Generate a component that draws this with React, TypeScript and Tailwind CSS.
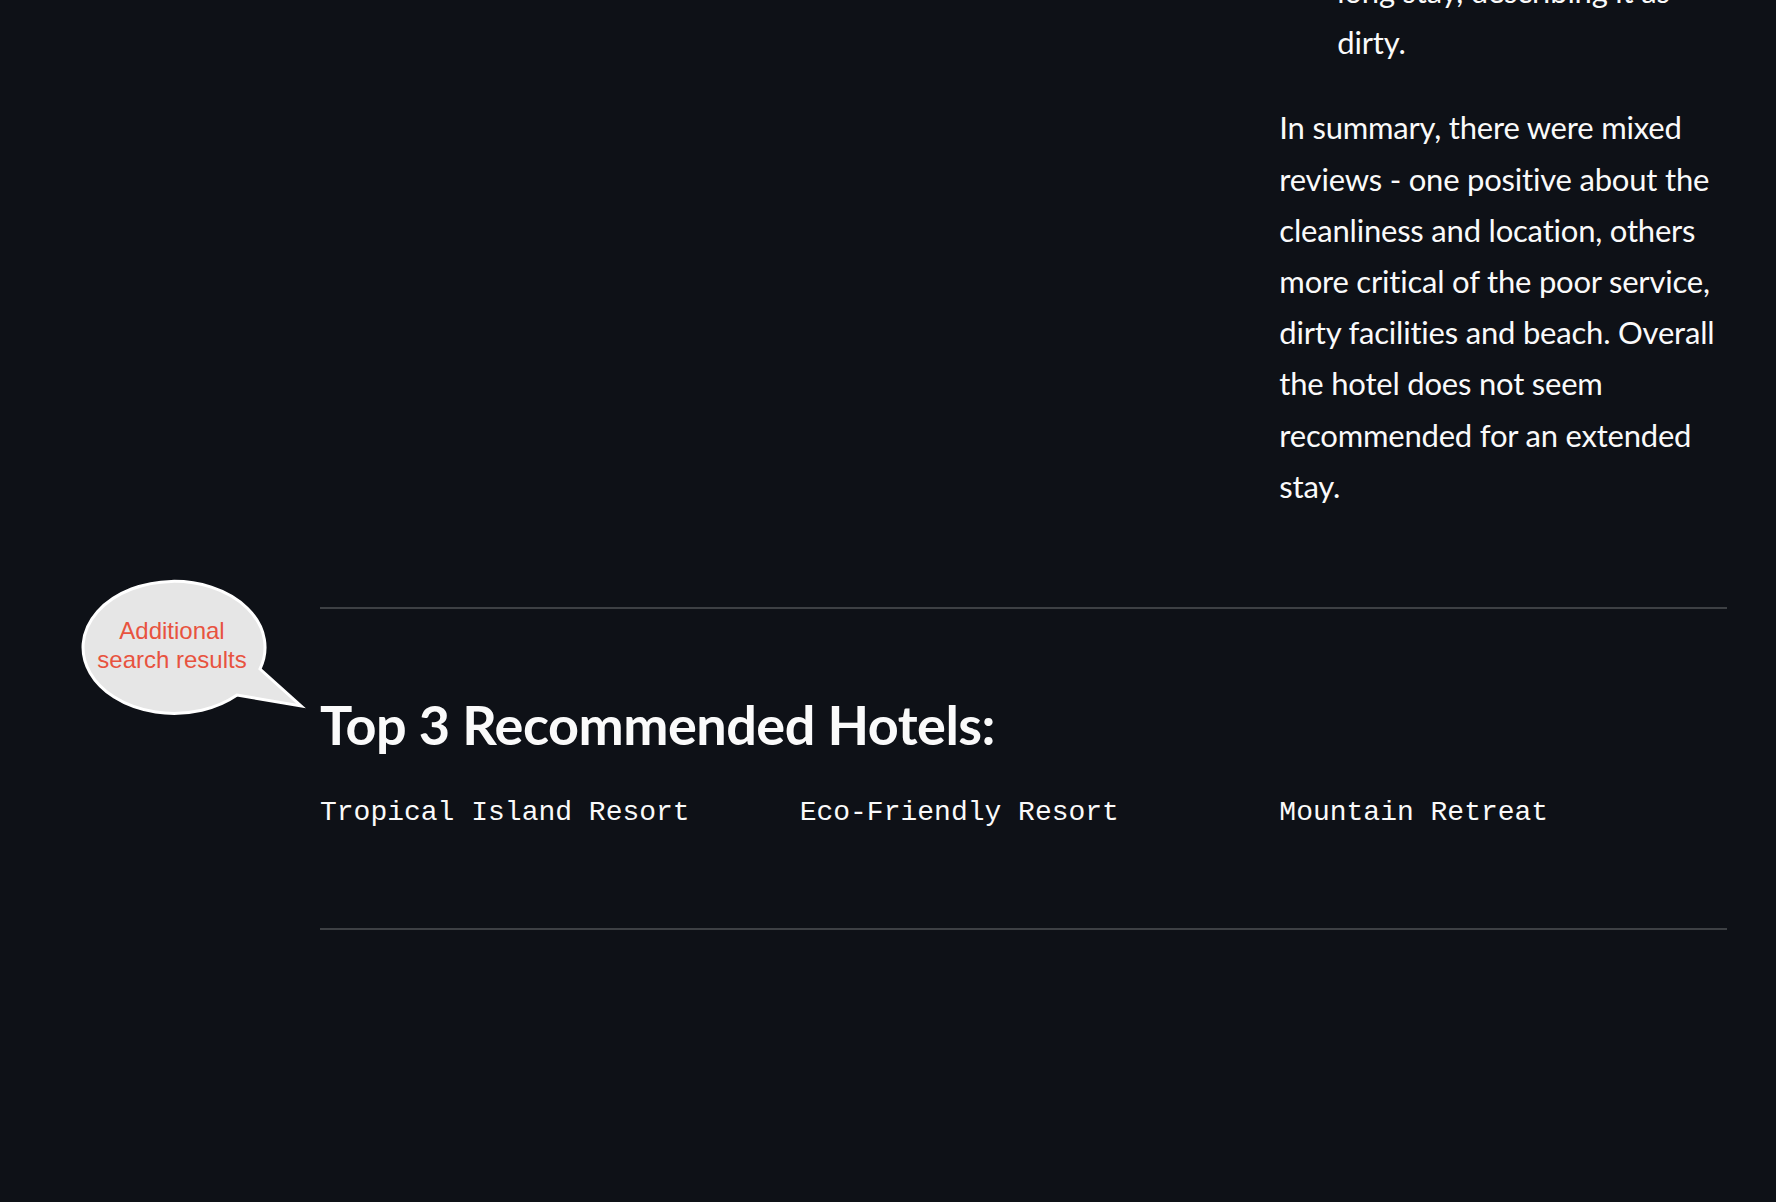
const summary = [
  "In summary, there were mixed",
  "reviews - one positive about the",
  "cleanliness and location, others",
  "more critical of the poor service,",
  "dirty facilities and beach. Overall",
  "the hotel does not seem",
  "recommended for an extended",
  "stay.",
];

const hotels = ["Tropical Island Resort", "Eco-Friendly Resort", "Mountain Retreat"];

const Bubble = () => {
  return (
    <div className="absolute left-[70px] top-[570px] h-[150px] w-[240px]">
      <svg width="240" height="150" viewBox="0 0 240 150" className="absolute inset-0">
        <path
          d="M 167 125 A 91 66 0 1 1 190 99 L 231 136 Z"
          fill="#e6e6e6"
          stroke="#ffffff"
          strokeWidth="3"
          strokeLinejoin="miter"
        />
      </svg>
      <div className="absolute left-[11px] top-[46px] w-[182px] text-center font-['Liberation_Sans',Arial,sans-serif] text-[24px] leading-[29px] text-[#e8533f]">
        Additional
        <br />
        search results
      </div>
    </div>
  );
};

export default function App() {
  return (
    <div className="relative h-[1202px] overflow-hidden bg-[#0e1117] font-['Lato',sans-serif] text-[#fafafa]">
      <Bubble />

      <div className="ml-[320px] w-[1407px]">
        <div className="-mt-[34px] grid grid-cols-3 gap-8">
          <div />
          <div />
          <div className="whitespace-nowrap text-[31px] leading-[51.2px] tracking-[-0.2px]">
            <ul className="list-none pl-[58px]">
              <li>
                long stay, describing it as
                <br />
                dirty.
              </li>
            </ul>
            <p className="mt-[34px]">
              {summary.map((line, i) => (
                <span key={i}>
                  {line}
                  <br />
                </span>
              ))}
            </p>
          </div>
        </div>

        <hr className="mt-[95px] h-[2px] border-0 bg-[#3d4044]" />

        <h3 className="mt-[82px] text-[54px] font-bold leading-[67px] tracking-[-0.5px]">
          Top 3 Recommended Hotels:
        </h3>

        <div className="mt-[35px] grid grid-cols-3 gap-8">
          {hotels.map((h) => (
            <div key={h} className="font-['Liberation_Mono',monospace] text-[28px] leading-[40px]">
              {h}
            </div>
          ))}
        </div>

        {/* closing rule under the results */}
        <hr className="mt-[95px] h-[2px] border-0 bg-[#3d4044]" />
      </div>
    </div>
  );
}
